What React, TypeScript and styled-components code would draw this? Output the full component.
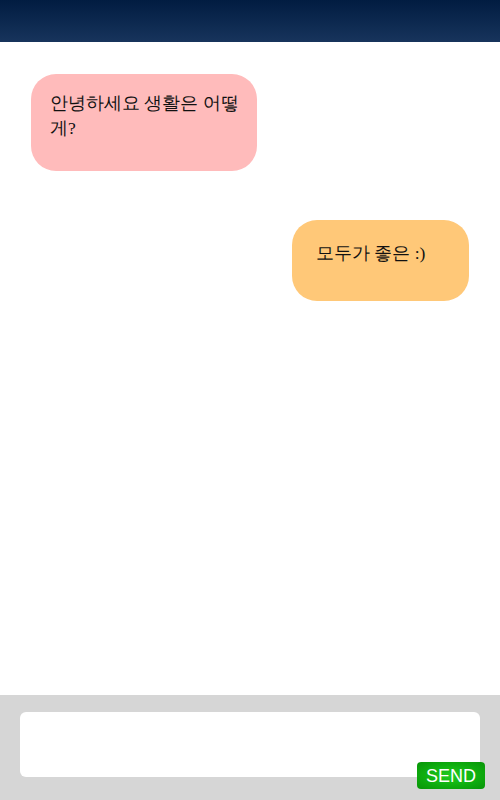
import React from "react";
import styled, { createGlobalStyle } from "styled-components";

const Global = createGlobalStyle`
  html, body { margin: 0; padding: 0; }
  body { font-family: "Liberation Serif", serif; background: #fff; }
  * { box-sizing: border-box; }
`;

const Page = styled.div`
  display: flex;
  flex-direction: column;
  width: 500px;
  height: 800px;
`;

const Header = styled.header`
  height: 42px;
  flex: none;
  background: linear-gradient(#011c41, #17345c);
`;

const Messages = styled.main`
  flex: 1;
  display: flex;
  flex-direction: column;
  padding: 32px 31px 0 31px;
  gap: 49px;
`;

const Bubble = styled.div<{ $mine?: boolean }>`
  align-self: ${(p) => (p.$mine ? "flex-end" : "flex-start")};
  width: ${(p) => (p.$mine ? "177px" : "226px")};
  min-height: ${(p) => (p.$mine ? "81px" : "97px")};
  background: ${(p) => (p.$mine ? "#ffc878" : "#ffbbbb")};
  border-radius: 25px;
  padding: ${(p) => (p.$mine ? "21px 12px 0 24px" : "17px 12px 0 19px")};
  font-size: 17.5px;
  line-height: 25px;
  color: #111;
  word-break: break-all;
`;

const Footer = styled.footer`
  position: relative;
  flex: none;
  height: 105px;
  background: #d6d6d6;
  padding: 17px 20px 0 20px;
`;

const Input = styled.div`
  height: 65px;
  background: #fff;
  border-radius: 6px;
`;

const SendButton = styled.button`
  position: absolute;
  right: 15px;
  bottom: 11px;
  width: 68px;
  height: 27px;
  border: none;
  border-radius: 4px;
  background: radial-gradient(ellipse at center, #20cc20 0%, #0fae0f 55%, #089408 100%);
  color: #fff;
  font-family: "Liberation Sans", Arial, sans-serif;
  font-size: 18px;
  padding: 2px 0 0 0;
  line-height: 25px;
  cursor: pointer;
`;

export default function App() {
  return (
    <Page>
      <Global />
      <Header />
      <Messages>
        <Bubble>안녕하세요 생활은 어떻게?</Bubble>
        <Bubble $mine>모두가 좋은 :)</Bubble>
      </Messages>
      <Footer>
        <Input />
        <SendButton>SEND</SendButton>
      </Footer>
    </Page>
  );
}
